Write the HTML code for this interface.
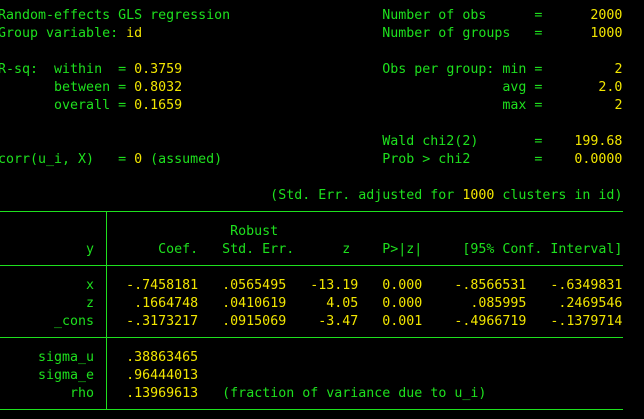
<!DOCTYPE html>
<html><head><meta charset="utf-8"><style>
html,body{margin:0;padding:0;background:#000;width:644px;height:419px;overflow:hidden}
.l{position:absolute;left:-2px;height:18px;line-height:18px;white-space:pre;font-family:"DejaVu Sans Mono","Liberation Mono",monospace;font-size:13.3px;color:#1ee01e}
.y{color:#f2e600}
.h{position:absolute;left:0;width:623px;height:1px;background:#1ee01e}
.v{position:absolute;left:106px;top:211px;width:1px;height:198px;background:#1ee01e}
</style></head><body>
<div class="l" style="top:7px">Random-effects GLS regression                   Number of obs      =      <span class="y">2000</span></div>
<div class="l" style="top:25px">Group variable: <span class="y">id</span>                              Number of groups   =      <span class="y">1000</span></div>
<div class="l" style="top:61px">R-sq:  within  = <span class="y">0.3759</span>                         Obs per group: min =         <span class="y">2</span></div>
<div class="l" style="top:79px">       between = <span class="y">0.8032</span>                                        avg =       <span class="y">2.0</span></div>
<div class="l" style="top:97px">       overall = <span class="y">0.1659</span>                                        max =         <span class="y">2</span></div>
<div class="l" style="top:133px">                                                Wald chi2(2)       =    <span class="y">199.68</span></div>
<div class="l" style="top:151px">corr(u_i, X)   = <span class="y">0</span> (assumed)                    Prob &gt; chi2        =    <span class="y">0.0000</span></div>
<div class="l" style="top:187px">                                  (Std. Err. adjusted for <span class="y">1000</span> clusters in id)</div>
<div class="h" style="top:211px"></div>
<div class="l" style="top:223px">                             Robust</div>
<div class="l" style="top:241px">           y        Coef.   Std. Err.      z    P&gt;|z|     [95% Conf. Interval]</div>
<div class="h" style="top:265px"></div>
<div class="l" style="top:277px">           x    <span class="y">-.7458181   .0565495   -13.19   0.000    -.8566531   -.6349831</span></div>
<div class="l" style="top:295px">           z    <span class="y"> .1664748   .0410619     4.05   0.000      .085995    .2469546</span></div>
<div class="l" style="top:313px">       _cons    <span class="y">-.3173217   .0915069    -3.47   0.001    -.4966719   -.1379714</span></div>
<div class="h" style="top:337px"></div>
<div class="l" style="top:349px">     sigma_u    <span class="y">.38863465</span></div>
<div class="l" style="top:367px">     sigma_e    <span class="y">.96444013</span></div>
<div class="l" style="top:385px">         rho    <span class="y">.13969613</span>   (fraction of variance due to u_i)</div>
<div class="h" style="top:409px"></div>
<div class="v"></div>
</body></html>
